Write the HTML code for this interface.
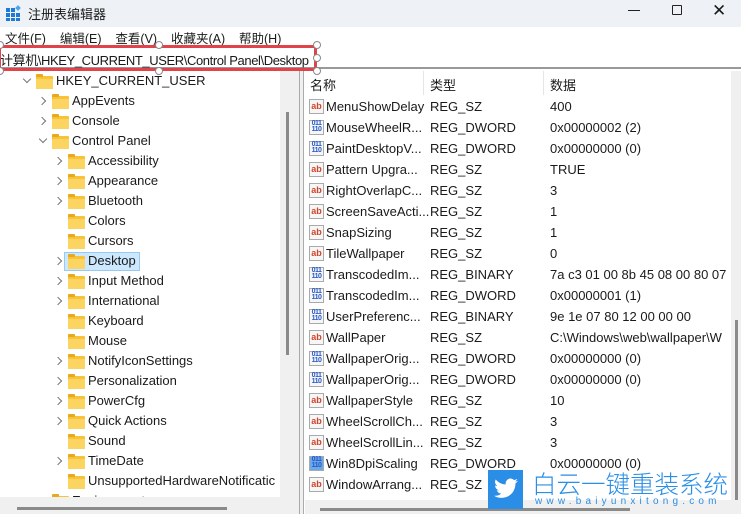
<!DOCTYPE html>
<html><head><meta charset="utf-8"><style>
*{margin:0;padding:0;box-sizing:border-box}
body{width:741px;height:514px;overflow:hidden;background:#fff;font-family:"Liberation Sans","Noto Sans CJK SC",sans-serif;font-size:13px;color:#1a1a1a;position:relative}
.a{position:absolute;white-space:nowrap}
.fold{position:absolute;width:17px;height:13px;background:#f8c337;border-radius:1px}
.fold:before{content:"";position:absolute;left:0;top:-2px;width:7px;height:3px;background:#e8a91c;border-radius:1px 1px 0 0}
.fold:after{content:"";position:absolute;left:0;top:3px;width:17px;height:10px;background:#fcd462}
.chev{position:absolute;width:6px;height:6px;border-right:1.3px solid #777;border-bottom:1.3px solid #777;transform:rotate(-45deg)}
.chevd{transform:rotate(45deg)}
.ic{position:absolute;width:15px;height:15px;border:1px solid #aaa;background:#f6f6f6;font-size:9px;font-weight:bold;line-height:13px;text-align:center}
.ab{color:#d2442a}
.bin{color:#2358c8;font-size:7px;line-height:6px;letter-spacing:-0.5px}
</style></head><body>
<div class="a" style="left:0;top:0;width:741px;height:27px;background:#eef2f7"></div>
<svg class="a" style="left:6px;top:5px" width="16" height="16"><rect x="0" y="3" width="4" height="4" fill="#1e7ad6"/><rect x="5" y="3" width="4" height="4" fill="#1e7ad6"/><rect x="0" y="8" width="4" height="4" fill="#1e7ad6"/><rect x="5" y="8" width="4" height="4" fill="#1e7ad6"/><rect x="10" y="8" width="4" height="4" fill="#1e7ad6"/><rect x="0" y="13" width="4" height="3" fill="#1e7ad6"/><rect x="5" y="13" width="4" height="3" fill="#1e7ad6"/><rect x="10" y="13" width="4" height="3" fill="#1e7ad6"/><rect x="10" y="1" width="4" height="4" fill="#4aa3f0" transform="rotate(45 12 3)"/></svg>
<div class="a" style="left:28px;top:4px;font-size:13px">注册表编辑器</div>
<div class="a" style="left:628px;top:10px;width:12px;height:1px;background:#222"></div>
<div class="a" style="left:672px;top:5px;width:10px;height:10px;border:1px solid #222;border-radius:1px"></div>
<div class="a" style="left:712px;top:1px;font-size:17px;font-weight:300">✕</div>
<div class="a" style="left:5px;top:28px;font-size:12.5px">文件(F)&nbsp;&nbsp;&nbsp; 编辑(E)&nbsp;&nbsp;&nbsp; 查看(V)&nbsp;&nbsp;&nbsp; 收藏夹(A)&nbsp;&nbsp;&nbsp; 帮助(H)</div>
<div class="a" style="left:0;top:45px;width:741px;height:24px;border-bottom:2px solid #999"></div>
<div class="a" style="left:0;top:50px;font-size:13px;letter-spacing:-0.4px">计算机\HKEY_CURRENT_USER\Control Panel\Desktop</div>
<div class="a" style="left:-2px;top:45px;width:319px;height:26px;border:3px solid #e0434a"></div>
<div class="a" style="left:-4px;top:41px;width:8px;height:8px;border:1px solid #888;background:#fff;border-radius:50%"></div>
<div class="a" style="left:155px;top:41px;width:8px;height:8px;border:1px solid #888;background:#fff;border-radius:50%"></div>
<div class="a" style="left:313px;top:41px;width:8px;height:8px;border:1px solid #888;background:#fff;border-radius:50%"></div>
<div class="a" style="left:313px;top:54px;width:8px;height:8px;border:1px solid #888;background:#fff;border-radius:50%"></div>
<div class="a" style="left:-4px;top:67px;width:8px;height:8px;border:1px solid #888;background:#fff;border-radius:50%"></div>
<div class="a" style="left:155px;top:67px;width:8px;height:8px;border:1px solid #888;background:#fff;border-radius:50%"></div>
<div class="a" style="left:313px;top:67px;width:8px;height:8px;border:1px solid #888;background:#fff;border-radius:50%"></div>
<div class="a" style="left:64px;top:252px;width:76px;height:19px;background:#cce8ff;border:1px solid #99c9ef"></div>
<div id="tree"></div>
<!-- left pane chrome -->
<div class="a" style="left:280px;top:71px;width:19px;height:443px;background:#f0f0f0"></div>
<div class="a" style="left:286px;top:112px;width:3px;height:243px;background:#8a8a8a"></div>
<div class="a" style="left:0;top:497px;width:299px;height:17px;background:#f0f0f0"></div>
<div class="a" style="left:17px;top:507px;width:210px;height:3px;background:#8a8a8a"></div>
<div class="a" style="left:299px;top:71px;width:5px;height:443px;background:#f0f0f0;border-left:1px solid #aaa;border-right:1px solid #aaa"></div>
<!-- right pane -->
<div class="a" style="left:310px;top:75px">名称</div>
<div class="a" style="left:430px;top:75px">类型</div>
<div class="a" style="left:550px;top:75px">数据</div>
<div class="a" style="left:423px;top:71px;width:1px;height:24px;background:#e5e5e5"></div>
<div class="a" style="left:543px;top:71px;width:1px;height:24px;background:#e5e5e5"></div>
<div id="list"></div>
<div class="a" style="left:731px;top:71px;width:10px;height:443px;background:#f0f0f0"></div>
<div class="a" style="left:735px;top:320px;width:3px;height:180px;background:#8a8a8a"></div>
<div class="a" style="left:305px;top:500px;width:436px;height:14px;background:#f0f0f0"></div>
<div class="a" style="left:320px;top:508px;width:310px;height:3px;background:#8a8a8a"></div>
<!-- watermark -->
<div class="a" style="left:488px;top:470px;width:35px;height:39px;background:#2a8ee6"></div>
<svg class="a" style="left:492px;top:476px" width="28" height="26" viewBox="0 0 24 24"><path fill="#fff" d="M23 4.5c-.8.4-1.7.6-2.6.7.9-.6 1.6-1.4 2-2.5-.9.5-1.9.9-2.9 1.1A4.5 4.5 0 0 0 11.8 7.9 12.8 12.8 0 0 1 2.5 3.2a4.5 4.5 0 0 0 1.4 6 4.5 4.5 0 0 1-2-.6 4.5 4.5 0 0 0 3.6 4.5 4.5 4.5 0 0 1-2 .1 4.5 4.5 0 0 0 4.2 3.1A9 9 0 0 1 1 18.2 12.8 12.8 0 0 0 7.9 20.2c8.3 0 12.8-6.9 12.8-12.8v-.6c.9-.6 1.7-1.4 2.3-2.3z"/></svg>
<div class="a" style="left:532px;top:466px;font-size:24.5px;color:#2a8ee6;font-family:'Noto Sans CJK SC',sans-serif;font-weight:300">白云一键重装系统</div>
<div class="a" style="left:535px;top:496px;font-size:10px;color:#2a8ee6;letter-spacing:4.2px">www.baiyunxitong.com</div>
<script>
var t=[[0,'HKEY_CURRENT_USER','d'],[1,'AppEvents','r'],[1,'Console','r'],[1,'Control Panel','d'],[2,'Accessibility','r'],[2,'Appearance','r'],[2,'Bluetooth','r'],[2,'Colors',''],[2,'Cursors',''],[2,'Desktop','r'],[2,'Input Method','r'],[2,'International','r'],[2,'Keyboard',''],[2,'Mouse',''],[2,'NotifyIconSettings','r'],[2,'Personalization','r'],[2,'PowerCfg','r'],[2,'Quick Actions','r'],[2,'Sound',''],[2,'TimeDate','r'],[2,'UnsupportedHardwareNotificatic',''],[1,'Environment','r']];
var h='';t.forEach(function(r,i){var y=81+20*i,x=20+r[0]*16;
if(r[2]=='r')h+='<div class="chev" style="left:'+(x+3)+'px;top:'+(y-3)+'px"></div>';
if(r[2]=='d')h+='<div class="chev chevd" style="left:'+(x+4)+'px;top:'+(y-5)+'px"></div>';
h+='<div class="fold" style="left:'+(x+16)+'px;top:'+(y-5)+'px"></div>';
h+='<div class="a" style="left:'+(x+36)+'px;top:'+(y-8)+'px">'+r[1]+'</div>';});
document.getElementById('tree').innerHTML=h;
var L=[['a','MenuShowDelay','REG_SZ','400'],['b','MouseWheelR...','REG_DWORD','0x00000002 (2)'],['b','PaintDesktopV...','REG_DWORD','0x00000000 (0)'],['a','Pattern Upgra...','REG_SZ','TRUE'],['a','RightOverlapC...','REG_SZ','3'],['a','ScreenSaveActi...','REG_SZ','1'],['a','SnapSizing','REG_SZ','1'],['a','TileWallpaper','REG_SZ','0'],['b','TranscodedIm...','REG_BINARY','7a c3 01 00 8b 45 08 00 80 07'],['b','TranscodedIm...','REG_DWORD','0x00000001 (1)'],['b','UserPreferenc...','REG_BINARY','9e 1e 07 80 12 00 00 00'],['a','WallPaper','REG_SZ','C:\\Windows\\web\\wallpaper\\W'],['b','WallpaperOrig...','REG_DWORD','0x00000000 (0)'],['b','WallpaperOrig...','REG_DWORD','0x00000000 (0)'],['a','WallpaperStyle','REG_SZ','10'],['a','WheelScrollCh...','REG_SZ','3'],['a','WheelScrollLin...','REG_SZ','3'],['c','Win8DpiScaling','REG_DWORD','0x00000000 (0)'],['a','WindowArrang...','REG_SZ','']];
var g='';L.forEach(function(r,i){var y=107+21*i;
if(r[0]=='a')g+='<div class="ic ab" style="left:309px;top:'+(y-8)+'px">ab</div>';
else g+='<div class="ic bin" style="left:309px;top:'+(y-8)+'px;'+(r[0]=='c'?'background:#6aa8e8;':'')+'">011<br>110</div>';
g+='<div class="a" style="left:326px;top:'+(y-8)+'px">'+r[1]+'</div><div class="a" style="left:430px;top:'+(y-8)+'px">'+r[2]+'</div><div class="a" style="left:550px;top:'+(y-8)+'px">'+r[3]+'</div>';});
document.getElementById('list').innerHTML=g;
</script>
</body></html>
